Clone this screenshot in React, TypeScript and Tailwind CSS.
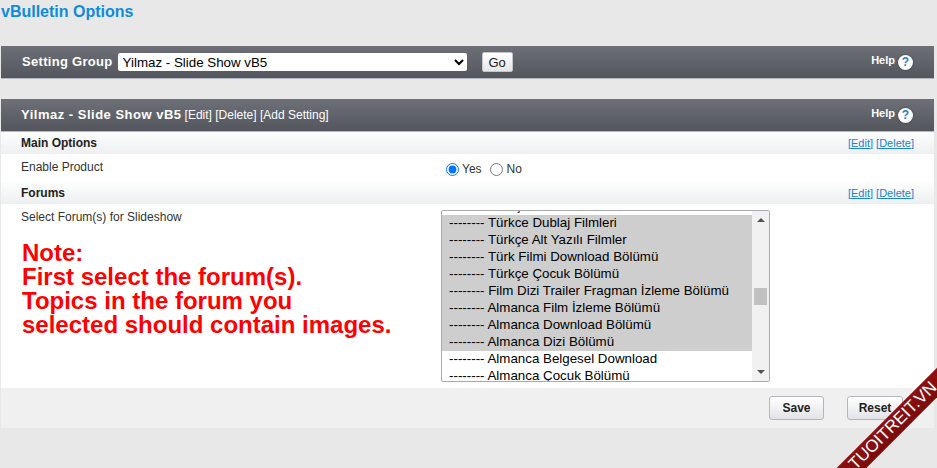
const forums = [
  { name: "Türkçe Yabancı Dil Filmleri", selected: false },
  { name: "Türkce Dublaj Filmleri", selected: true },
  { name: "Türkçe Alt Yazılı Filmler", selected: true },
  { name: "Türk Filmi Download Bölümü", selected: true },
  { name: "Türkçe Çocuk Bölümü", selected: true },
  { name: "Film Dizi Trailer Fragman İzleme Bölümü", selected: true },
  { name: "Almanca Film İzleme Bölümü", selected: true },
  { name: "Almanca Download Bölümü", selected: true },
  { name: "Almanca Dizi Bölümü", selected: true },
  { name: "Almanca Belgesel Download", selected: false },
  { name: "Almanca Çocuk Bölümü", selected: false },
];

function Help() {
  return (
    <div className="flex items-center gap-[3px] text-[11px] font-bold text-white">
      <span className="-mt-[3px]">Help</span>
      <span className="flex h-[15px] w-[15px] items-center justify-center rounded-full bg-white text-[12px] text-[#1b7fc4] shadow-[0_0_2px_rgba(0,0,0,0.5)]">
        ?
      </span>
    </div>
  );
}

function HeaderBar({ children, left }: { children: React.ReactNode; left: string }) {
  return (
    <div
      className={`flex h-[33px] items-center justify-between border-b border-[#b4b8c0] bg-gradient-to-b from-[#6d7077] to-[#53565d] ${left} pr-[21px]`}
    >
      {children}
    </div>
  );
}

function SectionRow({ title }: { title: string }) {
  return (
    <div className="flex h-[22px] items-center justify-between bg-gradient-to-b from-[#fcfdfd] to-[#eeeff0] pl-[20px] pr-[20px] text-[12px]">
      <span className="font-bold text-[#222]">{title}</span>
      <span className="text-[11px] text-[#1b84d0]">
        <a className="underline">[Edit]</a> <a className="underline">[Delete]</a>
      </span>
    </div>
  );
}

function ForumList() {
  return (
    <div className="flex h-[172px] w-[329px] overflow-hidden rounded-[2px] border border-[#a9a9b0] bg-white">
      <div className="h-full w-[310px] overflow-hidden text-[13.33px] leading-[15px] text-black">
        <div className="-mt-[13px]">
          {forums.map((f) => (
            <div
              key={f.name}
              className={`h-[17px] whitespace-pre pl-[7px] ${f.selected ? "bg-[#cecece]" : ""}`}
            >
              {"-------- " + f.name}
            </div>
          ))}
        </div>
      </div>
      <div className="flex w-[17px] flex-1 flex-col items-center bg-[#f1f1f1] py-[7px]">
        <span className="h-0 w-0 border-x-[4px] border-b-[4px] border-x-transparent border-b-[#505050]" />
        <span className="mt-[66px] h-[17px] w-[13px] bg-[#c1c1c1]" />
        <span className="mt-auto h-0 w-0 border-x-[4px] border-t-[4px] border-x-transparent border-t-[#505050]" />
      </div>
    </div>
  );
}

function ActionButton({ label, className }: { label: string; className: string }) {
  return (
    <button
      type="button"
      className={`h-[24px] rounded-[3px] border border-[#b3b6bd] bg-gradient-to-b from-white to-[#e2e3e6] text-[12px] font-bold text-[#222] ${className}`}
    >
      {label}
    </button>
  );
}

export default function App() {
  return (
    <div className="relative h-[468px] w-[937px] overflow-hidden bg-[#e8e8e8] font-['Liberation_Sans',Arial,sans-serif]">
      <h1 className="h-[46px] pl-[1px] pt-[3px] text-[16px] leading-[18px] font-bold text-[#0f8bdc]">
        vBulletin Options
      </h1>

      <div className="ml-[1px] w-[933px]">
        <HeaderBar left="pl-[21px]">
          <div className="flex items-center">
            <span className="text-[13px] font-bold tracking-[0.3px] text-white">Setting Group</span>
            <select
              defaultValue="slide"
              className="ml-[5px] h-[18px] w-[349px] rounded-[2px] bg-white pl-[1px] text-[13.33px] text-black"
            >
              <option value="slide">Yilmaz - Slide Show vB5</option>
            </select>
            <button
              type="button"
              className="ml-[15px] h-[20px] w-[31px] rounded-[2px] border border-[#c4c6cb] bg-gradient-to-b from-white to-[#e6e7e9] text-[13px] text-[#222]"
            >
              Go
            </button>
          </div>
          <Help />
        </HeaderBar>

        <div className="mt-[20px]">
          <HeaderBar left="pl-[20px]">
            <div className="flex items-baseline gap-[3px] text-[12px] text-white">
              <span className="text-[13px] font-bold tracking-[0.5px]">Yilmaz - Slide Show vB5</span>
              <span>[Edit] [Delete] [Add Setting]</span>
            </div>
            <Help />
          </HeaderBar>
        </div>

        <SectionRow title="Main Options" />
        <div className="flex h-[28px] bg-white pl-[20px] text-[12px] text-[#333]">
          <span className="w-[425px] pt-[4px]">Enable Product</span>
          <label className="mt-[9px] flex items-start">
            <input type="radio" name="enable" defaultChecked className="m-0 h-[13px] w-[13px]" />
            <span className="ml-[3px] leading-[13px]">Yes</span>
          </label>
          <label className="ml-[8px] mt-[9px] flex items-start">
            <input type="radio" name="enable" className="m-0 h-[13px] w-[13px]" />
            <span className="ml-[4px] leading-[13px]">No</span>
          </label>
        </div>

        <SectionRow title="Forums" />
        <div className="flex h-[184px] bg-white pl-[20px] text-[12px] text-[#333]">
          <div className="w-[420px]">
            <div className="pt-[6px] leading-[14px]">Select Forum(s) for Slideshow</div>
            <p className="ml-[1px] mt-[17px] text-[24px] leading-[24px] font-bold text-[#ff0000]">
              Note:
              <br />
              First select the forum(s).
              <br />
              Topics in the forum you
              <br />
              selected should contain images.
            </p>
          </div>
          <div className="pt-[6px]">
            <ForumList />
          </div>
        </div>

        <div className="flex h-[40px] items-center justify-end bg-[#f0f0f0] pb-[1px] pr-[31px]">
          <ActionButton label="Save" className="w-[55px]" />
          <ActionButton label="Reset" className="ml-[23px] w-[56px]" />
        </div>
      </div>

      {/* corner watermark */}
      <div className="absolute left-[793px] top-[416px] flex h-[21px] w-[200px] -rotate-45 items-center justify-center bg-gradient-to-b from-[#8f1010] to-[#7a0c0c]">
        <span className="mb-[3px] ml-[1px] text-[17px] leading-none text-white">TUOITREIT.VN</span>
      </div>
    </div>
  );
}
